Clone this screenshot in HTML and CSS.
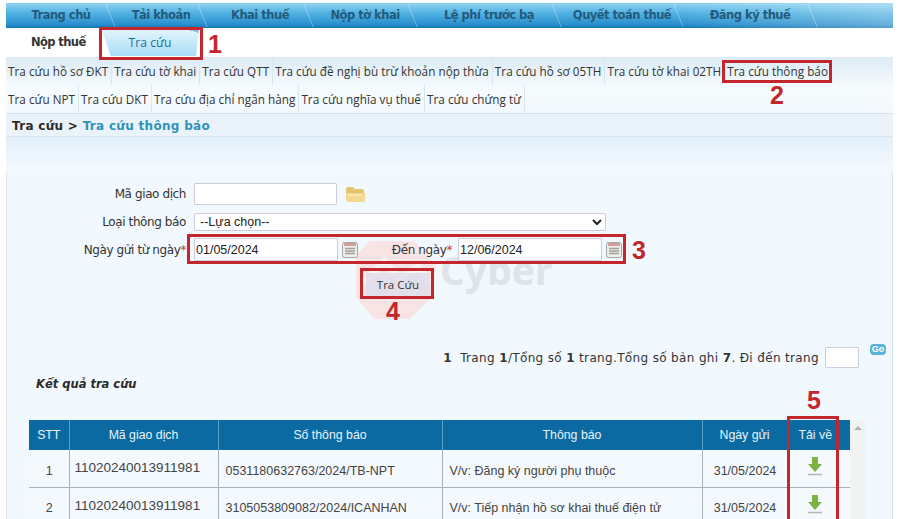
FILE: index.html
```html
<!DOCTYPE html>
<html lang="vi">
<head>
<meta charset="utf-8">
<title>Tra cứu thông báo</title>
<link rel="stylesheet" href="styles.css">
</head>
<body>
<div class="page">
  <nav class="mainnav">
    <a class="w1">Trang chủ</a><a class="w2">Tải khoản</a><a class="w3">Khai thuế</a><a class="w4">Nộp tờ khai</a><a class="w5">Lệ phí trước bạ</a><a class="w6">Quyết toán thuế</a><a class="w7">Đăng ký thuế</a>
  </nav>
  <div class="subnav">
    <a class="subtab">Nộp thuế</a>
    <a class="subtab active">Tra cứu</a>
  </div>
  <div class="links">
    <div class="linkrow"><a>Tra cứu hồ sơ ĐKT</a><a>Tra cứu tờ khai</a><a>Tra cứu QTT</a><a>Tra cứu đề nghị bù trừ khoản nộp thừa</a><a>Tra cứu hồ sơ 05TH</a><a>Tra cứu tờ khai 02TH</a><a class="plain">Tra cứu thông báo</a></div>
    <div class="linkrow"><a>Tra cứu NPT</a><a>Tra cứu DKT</a><a>Tra cứu địa chỉ ngân hàng</a><a>Tra cứu nghĩa vụ thuế</a><a>Tra cứu chứng từ</a></div>
  </div>
  <div class="crumb">Tra cứu &gt; <span>Tra cứu thông báo</span></div>
  <div class="band"></div>
  <main class="content">
    <div class="watermark">
      <svg width="90" height="78" viewBox="0 0 90 78"><path d="M14 0h44l22 24-6 34-20 20H18L0 56V14Z" fill="#f8e4e4"/><path d="M8 42 28 20l16 18 18-12 12 16" fill="none" stroke="#fbf2f3" stroke-width="7"/></svg>
      <span class="wm-text">Cyber</span>
    </div>
    <form class="form">
      <div class="row r1">
        <label>Mã giao dịch</label>
        <input class="in code" type="text">
        <svg class="folder" width="21" height="18" viewBox="0 0 21 18"><path d="M1 4q0-2 2-2h5l2 2h7q2 0 2 2v2H1Z" fill="#e5c36f"/><path d="M1 8h19v7q0 2-2 2H3q-2 0-2-2Z" fill="#f4d98e"/><path d="M3 10h15" stroke="#fff3c9" stroke-width="1.5" stroke-dasharray="1.5 1"/></svg>
      </div>
      <div class="row r2">
        <label>Loại thông báo</label>
        <select class="in sel"><option>--Lựa chọn--</option></select>
      </div>
      <div class="row r3">
        <label>Ngày gửi từ ngày<i>*</i></label>
        <input class="in date" type="text" value="01/05/2024">
        <svg class="cal" width="16" height="17" viewBox="0 0 16 17"><rect x=".5" y="1.5" width="15" height="15" rx="2" fill="#efeee8" stroke="#a5a5a5"/><rect x="2" y="2" width="12" height="3" fill="#d3a0a0"/><path d="M3 7.500h10M3 10h10M3 12.500h10" stroke="#a0a0a0" stroke-width="1.300"/></svg>
        <label class="to">Đến ngày<i>*</i></label>
        <input class="in date" type="text" value="12/06/2024">
        <svg class="cal" width="16" height="17" viewBox="0 0 16 17"><rect x=".5" y="1.5" width="15" height="15" rx="2" fill="#efeee8" stroke="#a5a5a5"/><rect x="2" y="2" width="12" height="3" fill="#d3a0a0"/><path d="M3 7.500h10M3 10h10M3 12.500h10" stroke="#a0a0a0" stroke-width="1.300"/></svg>
      </div>
      <div class="actions"><button type="button" class="btn">Tra Cứu</button></div>
    </form>
    <div class="pager">
      <span><b>1</b>&nbsp; Trang <b>1</b>/Tổng số <b>1</b> trang.Tổng số bản ghi <b>7</b>. Đi đến trang</span>
      <input class="in page-in" type="text">
      <span class="go">Go</span>
    </div>
    <h3 class="result">Kết quả tra cứu</h3>
    <div class="tablewrap">
      <table class="grid">
        <colgroup><col class="c1"><col class="c2"><col class="c3"><col class="c4"><col class="c5"><col class="c6"></colgroup>
        <thead><tr><th>STT</th><th>Mã giao dịch</th><th>Số thông báo</th><th>Thông báo</th><th>Ngày gửi</th><th>Tải về</th></tr></thead>
        <tbody>
          <tr><td class="ctr">1</td><td class="tx"><span class="up">11020240013911981</span></td><td>0531180632763/2024/TB-NPT</td><td>V/v: Đăng ký người phụ thuộc</td><td class="ctr">31/05/2024</td><td class="ctr"><svg class="dl" width="20" height="20" viewBox="0 0 20 20"><path d="M7 1h6v7h4l-7 8-7-8h4Z" fill="#7cb342"/><path d="M3 18.500h14" stroke="#b5b8a8" stroke-width="1.500"/></svg></td></tr>
          <tr><td class="ctr">2</td><td class="tx"><span class="up">11020240013911981</span></td><td>3105053809082/2024/ICANHAN</td><td>V/v: Tiếp nhận hồ sơ khai thuế điện tử</td><td class="ctr">31/05/2024</td><td class="ctr"><svg class="dl" width="20" height="20" viewBox="0 0 20 20"><path d="M7 1h6v7h4l-7 8-7-8h4Z" fill="#7cb342"/><path d="M3 18.500h14" stroke="#b5b8a8" stroke-width="1.500"/></svg></td></tr>
        </tbody>
      </table>
      <div class="scroll"><span class="caret"></span></div>
    </div>
  </main>
  <div class="mark m1"></div><span class="num n1">1</span>
  <div class="mark m2"></div><span class="num n2">2</span>
  <div class="mark m3"></div><span class="num n3">3</span>
  <div class="mark m4"></div><span class="num n4">4</span>
  <div class="mark m5"></div><span class="num n5">5</span>
</div>
</body>
</html>
```
FILE: styles.css
```css
* { box-sizing: border-box; }
html, body { margin: 0; height: 519px; overflow: hidden; background: #fff; }
body { font-family: "Open Sans", "DejaVu Sans", sans-serif; color: #333; }
.page { position: relative; width: 900px; height: 519px; overflow: hidden; padding: 3px 7px 0 6px; }

.mainnav { display: flex; height: 25px; padding-left: 1px; background: linear-gradient(90deg, rgba(255,255,255,0) 75%, rgba(255,255,255,.3)), linear-gradient(#8fd3f2 0, #52b2e2 40%, #2a8fcd 85%, #0f76b8 100%); }
.mainnav a { position: relative; height: 25px; text-align: center; font: bold 11.500px/25px "DejaVu Sans", sans-serif; letter-spacing: -.5px; color: #235a7c; }
.mainnav a::after { content: ""; position: absolute; right: 4px; top: 1px; width: 1px; height: 23px; background: rgba(255,255,255,.35); transform: skewX(22deg); }
.w1 { width: 108px; } .w2 { width: 92px; } .w3 { width: 106px; } .w4 { width: 104px; } .w5 { width: 144px; } .w6 { width: 122px; } .w7 { width: 134px; }

.subnav { display: flex; height: 29px; padding-left: 25px; }
.subtab { width: 67px; font: bold 11.500px/29px "DejaVu Sans", sans-serif; letter-spacing: -.6px; color: #333; }
.subtab.active { width: 98px; height: 28px; margin-left: 3px; text-align: center; font: 12px/29px "Open Sans", sans-serif; letter-spacing: .1px; color: #12709f; background: linear-gradient(to bottom left, #8fbedb 0 9%, transparent 9%), linear-gradient(#e6f6fd, #a8dcf5); clip-path: polygon(0 0, 100% 0, 97% 100%, 10% 100%); }

.links { height: 57px; background: linear-gradient(#dcebf6, #f6fbfe 55%, #f2f8fc); border-bottom: 1px solid #d5e2ec; }
.linkrow { display: flex; height: 28px; padding-left: 2px; }
.linkrow a { padding: 0 3px 0 0; margin-right: 2px; border-right: 1px solid #dbe7f0; font: 11.700px/29px "Open Sans", sans-serif; letter-spacing: .05px; color: #333; white-space: nowrap; }
.linkrow a.plain { border: 0; }

.crumb { height: 23px; padding: 1px 0 0 6px; background: #eaf3fa; border-bottom: 1px solid #d8e5ee; font: bold 12px/23px "DejaVu Sans", sans-serif; letter-spacing: .3px; color: #2b2b2b; }
.crumb span { color: #2f93b8; }
.band { height: 35px; background: linear-gradient(#e3f1fb, #f3f9fe); }

.content { position: relative; height: 347px; background: #f1f8fe; border-left: 1px solid #dde7ef; border-right: 1px solid #d4e2ee; }
.form { position: relative; padding-top: 11px; }
.row { display: flex; align-items: center; }
.row label { width: 187px; padding-right: 8px; text-align: right; font: 12px "DejaVu Sans", sans-serif; letter-spacing: -.4px; color: #333; white-space: nowrap; }
.row label i { color: #d33; font-style: normal; }
.r1 { height: 22px; }
.r2 { height: 18px; margin-top: 8px; }
.r3 { height: 23px; margin-top: 7px; }
.in { border: 1px solid #ccd; background: #fff; border-radius: 1px; font: 12.500px "Liberation Sans", sans-serif; color: #222; padding: 0 1px; outline: none; }
.code { width: 143px; height: 22px; }
.folder { margin-left: 8px; }
.sel { width: 412px; height: 18px; padding-left: 1px; }
.date { width: 144px; height: 23px; }
.cal { margin-left: 4px; }
.row label.to { width: 100px; padding-right: 6px; }
.actions { padding: 11px 0 0 359px; height: 35px; }
.btn { width: 64px; height: 24px; background: rgba(222,222,236,.85); border: 0; font: 11.500px "Open Sans", sans-serif; color: #333; padding: 0; }

.pager { display: flex; align-items: center; justify-content: flex-end; height: 21px; margin-top: 51px; padding-right: 6px; font: 12px "DejaVu Sans", sans-serif; letter-spacing: .35px; color: #333; }
.page-in { width: 34px; height: 21px; margin-left: 6px; }
.go { width: 16px; height: 11px; margin: -16px 0 0 11px; border-radius: 4px; background: #58b3d6; color: #fff; font: bold 9px/11px "Liberation Sans", sans-serif; letter-spacing: 0; text-align: center; }
.result { margin: 7px 0 0 29px; height: 18px; font: italic bold 11.500px/18px "DejaVu Sans", sans-serif; color: #2b2b2b; }

.tablewrap { display: flex; margin: 27px 0 0 22px; }
.grid { width: 821px; height: 104px; table-layout: fixed; border-collapse: collapse; font: 12.500px "Liberation Sans", sans-serif; color: #444; }
.c1 { width: 40px; } .c2 { width: 149px; } .c3 { width: 224px; } .c4 { width: 260px; } .c5 { width: 85px; } .c6 { width: 63px; }
.grid th { height: 30px; background: #0a6aa1; color: #e8f4fb; font-weight: normal; font-size: 12.300px; border-right: 1px solid #5a9fc6; }
.grid th:last-child { border-right: 0; padding-right: 8px; }
.grid td { height: 37px; padding: 5px 6px 0 7px; border-right: 1px solid #a9b2ba; border-bottom: 1px solid #a9b2ba; background: #f4f9fd; white-space: nowrap; }
.grid td:last-child { border-right: 0; padding: 0 8px 0 0; }
.grid .ctr { text-align: center; }
.grid .tx { padding-left: 5px; font-size: 13.500px; }
.up { position: relative; top: -3px; }
.dl { display: block; margin: -4px auto 0; }
.scroll { width: 15px; height: 110px; background: #f1f2f2; position: relative; }
.caret { position: absolute; left: 4px; top: 6px; width: 0; height: 0; border: 4px solid transparent; border-top: 0; border-bottom: 4px solid #b0b0b0; }

.watermark { position: absolute; left: 349px; top: 69px; display: flex; align-items: flex-start; }
.wm-text { margin: 4px 0 0 -6px; font: bold 39px/50px "Open Sans", sans-serif; color: #dfe4ea; }

.mark { position: absolute; border: 3px solid #c4262e; }
.m1 { left: 99px; top: 27px; width: 104px; height: 33px; }
.m2 { left: 722px; top: 60px; width: 110px; height: 23px; }
.m3 { left: 187px; top: 234px; width: 439px; height: 30px; }
.m4 { left: 360px; top: 268px; width: 74px; height: 31px; }
.m5 { left: 787px; top: 416px; width: 52px; height: 110px; }
.num { position: absolute; font: bold 25px/28px "Liberation Sans", sans-serif; color: #c4262e; }
.n1 { left: 208px; top: 30px; }
.n2 { left: 770px; top: 81px; }
.n3 { left: 632px; top: 236px; }
.n4 { left: 386px; top: 297px; }
.n5 { left: 807px; top: 386px; }
```
